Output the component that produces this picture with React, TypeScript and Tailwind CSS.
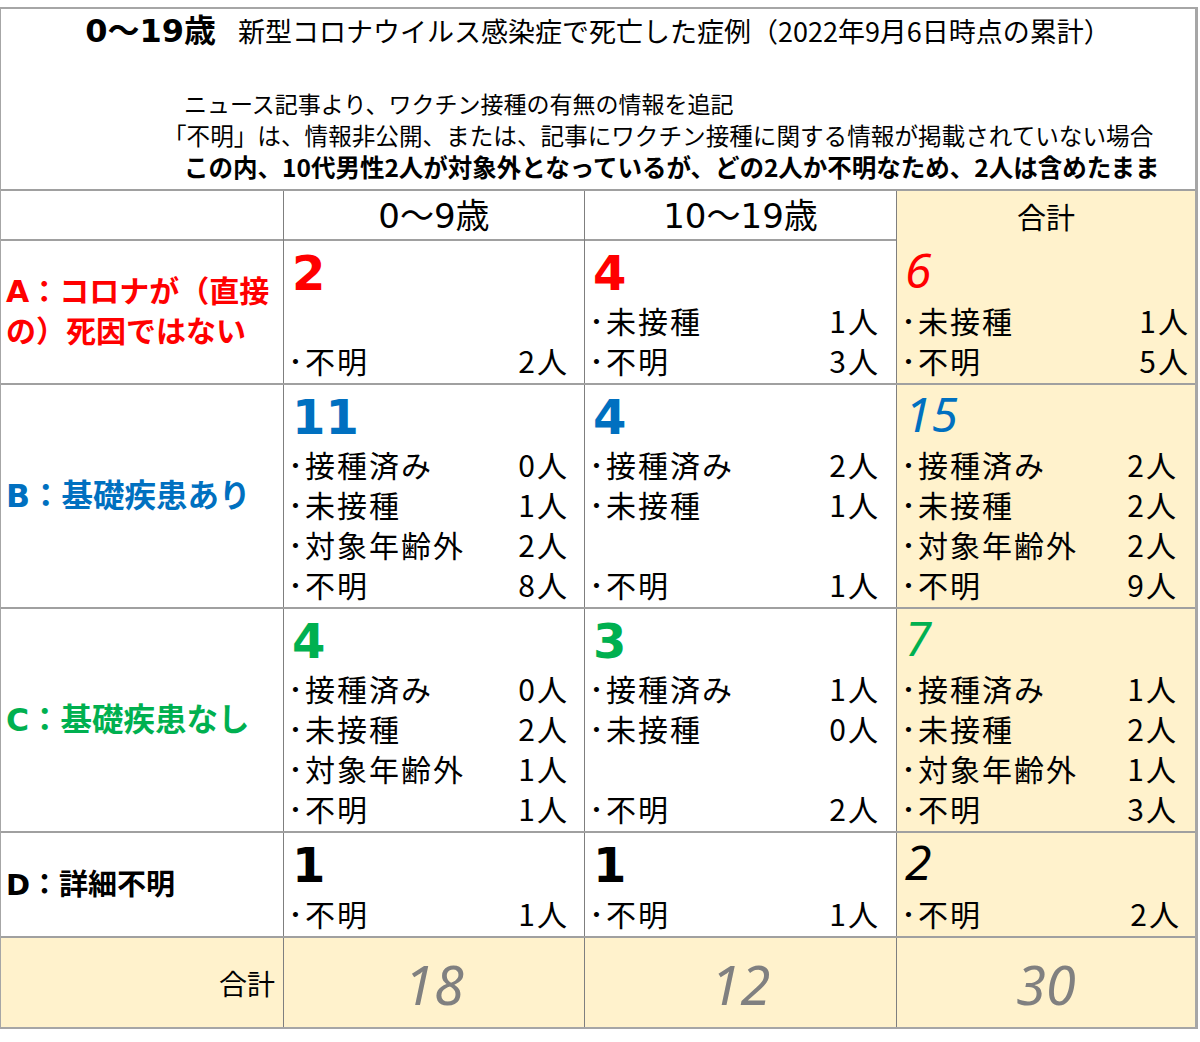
import React from 'react';

type Item = [string, string] | null;
type Cell = { n: string; items: Item[]; pr?: string };
type RowData = { label: React.ReactNode; color: string; size: string; h: string; cells: Cell[] };

const jp = "font-['Noto_Sans_CJK_JP',sans-serif]";
const latin = "font-['DejaVu_Sans','Noto_Sans_CJK_JP',sans-serif]";
const bold = "font-['DejaVu_Sans','Noto_Sans_CJK_JP',sans-serif] font-bold";
const ital = "font-['Noto_Sans','Noto_Sans_CJK_JP',sans-serif] italic";

const rows: RowData[] = [
  {
    label: (
      <>
        A：コロナが（直接
        <br />
        の）死因ではない
      </>
    ),
    color: 'text-[#ff0000]',
    size: 'text-[30px]',
    h: 'h-[142px]',
    cells: [
      { n: '2', items: [null, ['不明', '2人']] },
      { n: '4', items: [['未接種', '1人'], ['不明', '3人']] },
      { n: '6', items: [['未接種', '1人'], ['不明', '5人']], pr: 'pr-[5px]' },
    ],
  },
  {
    label: 'B：基礎疾患あり',
    color: 'text-[#0070c0]',
    size: 'text-[31.5px]',
    h: 'h-[222px]',
    cells: [
      { n: '11', items: [['接種済み', '0人'], ['未接種', '1人'], ['対象年齢外', '2人'], ['不明', '8人']] },
      { n: '4', items: [['接種済み', '2人'], ['未接種', '1人'], null, ['不明', '1人']] },
      { n: '15', items: [['接種済み', '2人'], ['未接種', '2人'], ['対象年齢外', '2人'], ['不明', '9人']] },
    ],
  },
  {
    label: 'C：基礎疾患なし',
    color: 'text-[#00b050]',
    size: 'text-[31.5px]',
    h: 'h-[222px]',
    cells: [
      { n: '4', items: [['接種済み', '0人'], ['未接種', '2人'], ['対象年齢外', '1人'], ['不明', '1人']] },
      { n: '3', items: [['接種済み', '1人'], ['未接種', '0人'], null, ['不明', '2人']] },
      { n: '7', items: [['接種済み', '1人'], ['未接種', '2人'], ['対象年齢外', '1人'], ['不明', '3人']] },
    ],
  },
  {
    label: 'D：詳細不明',
    color: 'text-black',
    size: 'text-[29px]',
    h: 'h-[103px]',
    cells: [
      { n: '1', items: [['不明', '1人']] },
      { n: '1', items: [['不明', '1人']] },
      { n: '2', items: [['不明', '2人']], pr: 'pr-[14px]' },
    ],
  },
];

const grid = 'grid grid-cols-[282px_301px_312px_1fr]';
const vline = 'border-l border-[#7f7f7f]';
const cream = 'bg-[#fff2cc]';

function Divider() {
  return <div className="h-[2px] bg-[#a0a0a0]" />;
}

function DataCell({ cell, idx, color }: { cell: Cell; idx: number; color: string }) {
  const total = idx === 2;
  const pr = cell.pr ?? (idx === 0 ? 'pr-[15px]' : idx === 1 ? 'pr-[16px]' : 'pr-[17px]');
  return (
    <div className={`${vline} ${total ? cream : 'bg-white'} flex flex-col pl-[4px] ${pr}`}>
      <div className="flex-1 pl-[4px]">
        <div className={`text-[48px] leading-[48px] ${color} ${total ? `pt-[5px] ${ital}` : `pt-[8px] ${bold}`}`}>{cell.n}</div>
      </div>
      {cell.items.map((it, i) => (
        <div key={i} className={`flex h-[40px] justify-between text-[30px] leading-[35px] tracking-[2px] text-black ${jp}`}>
          {it && (
            <>
              <span>･{it[0]}</span>
              <span>{it[1]}</span>
            </>
          )}
        </div>
      ))}
    </div>
  );
}

export default function App() {
  return (
    <div className="h-[1042px] w-[1200px] bg-white pt-[7px]">
      <div className="w-[1198px] border-b-2 border-l border-r-[3px] border-t-2 border-[#a6a6a6] text-black">
        {/* title */}
        <div className="h-[180px] pt-[2px]">
          <div className="flex items-baseline justify-center gap-[22px] whitespace-nowrap leading-[40px]">
            <span className={`text-[32px] ${bold}`}>0〜19歳</span>
            <span className={`text-[27px] ${jp}`}>新型コロナウイルス感染症で死亡した症例（2022年9月6日時点の累計）</span>
          </div>
          <div className={`mt-[36px] whitespace-nowrap leading-[32px] ${jp}`}>
            <div className="pl-[183px] text-[23px]">ニュース記事より、ワクチン接種の有無の情報を追記</div>
            <div className="pl-[162px] text-[23.6px]">「不明」は、情報非公開、または、記事にワクチン接種に関する情報が掲載されていない場合</div>
            <div className="pl-[183px] text-[24.5px] font-bold">この内、10代男性2人が対象外となっているが、どの2人か不明なため、2人は含めたまま</div>
          </div>
        </div>
        <Divider />

        {/* header */}
        <div className={`${grid} h-[48px] ${latin}`}>
          <div />
          <div className={`${vline} flex items-center justify-center text-[34px]`}>0〜9歳</div>
          <div className={`${vline} flex items-center justify-center text-[34px]`}>10〜19歳</div>
          <div className={`${vline} ${cream} flex items-center justify-center text-[29px] ${jp}`}>合計</div>
        </div>
        <Divider />

        {rows.map((r, i) => (
          <React.Fragment key={i}>
            <div className={`${grid} ${r.h}`}>
              <div className={`flex items-center pl-[5px] leading-[40px] ${r.size} ${bold} ${r.color}`}>
                <div>{r.label}</div>
              </div>
              {r.cells.map((c, j) => (
                <DataCell key={j} cell={c} idx={j} color={r.color} />
              ))}
            </div>
            <Divider />
          </React.Fragment>
        ))}

        {/* totals */}
        <div className={`${grid} h-[89px] ${cream}`}>
          <div className={`flex items-center justify-end pr-[8px] text-[28px] ${jp}`}>合計</div>
          {['18', '12', '30'].map((t) => (
            <div key={t} className={`${vline} flex items-center justify-center pt-[4px] text-[54px] text-[#808080] ${ital}`}>
              {t}
            </div>
          ))}
        </div>
      </div>
    </div>
  );
}
